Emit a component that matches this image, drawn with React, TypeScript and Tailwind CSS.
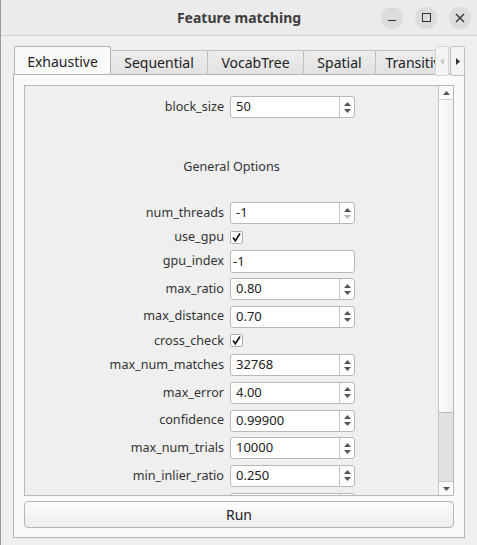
import React from "react";

const FONT = { fontFamily: '"Noto Sans", "DejaVu Sans", sans-serif' };

function SpinArrows({ downDisabled }: { downDisabled?: boolean }) {
  return (
    <div className="flex h-full w-[15px] flex-col items-center justify-center gap-[3px] border-l border-[#c4c4c4]">
      <svg width="7" height="4" viewBox="0 0 7 4">
        <path d="M3.5 0 L7 4 L0 4 Z" fill="#555" />
      </svg>
      <svg width="7" height="4" viewBox="0 0 7 4">
        <path d="M0 0 L7 0 L3.5 4 Z" fill={downDisabled ? "#b4b4b4" : "#555"} />
      </svg>
    </div>
  );
}

function Label({ text }: { text: string }) {
  return <div className="w-[199px] shrink-0 text-right text-[12.6px] leading-none text-[#333]">{text}</div>;
}

function SpinRow({ label, value, downDisabled }: { label: string; value: string; downDisabled?: boolean }) {
  return (
    <div className="flex h-[22px] shrink-0 items-center gap-[6px]">
      <Label text={label} />
      <div className="flex h-[22px] w-[125px] items-center rounded-[3px] border border-[#b8b8b8] bg-white">
        <div className="flex-1 pl-[5px] text-[13px] text-[#222]">{value}</div>
        <SpinArrows downDisabled={downDisabled} />
      </div>
    </div>
  );
}

function LineRow({ label, value }: { label: string; value: string }) {
  return (
    <div className="flex h-[22px] shrink-0 items-center gap-[6px]">
      <Label text={label} />
      <div className="flex h-[23px] w-[125px] items-center rounded-[3px] border border-[#b8b8b8] bg-white pl-[2px] text-[13px] text-[#222]">
        {value}
      </div>
    </div>
  );
}

function CheckRow({ label }: { label: string }) {
  return (
    <div className="flex h-[15px] shrink-0 items-center gap-[6px]">
      <Label text={label} />
      <div className="flex h-[13px] w-[13px] items-center justify-center rounded-[2px] border border-[#b0b0b0] bg-white">
        <svg width="11" height="11" viewBox="0 0 11 11">
          <path d="M2 5.5 L4.3 8.8 L9 1.5" fill="none" stroke="#111" strokeWidth="1.6" />
        </svg>
      </div>
    </div>
  );
}

function Tab({ text, w, active }: { text: string; w: string; active?: boolean }) {
  if (active) {
    return (
      <div className={`${w} relative z-10 -mb-px flex h-[29px] shrink-0 items-center justify-center rounded-t-[3px] border border-b-0 border-[#b4b4b4] bg-[#fafafa] text-[14px] text-[#222]`}>
        {text}
      </div>
    );
  }
  return (
    <div className={`${w} -ml-px flex h-[24px] shrink-0 items-center justify-center rounded-t-[2px] border border-b-0 border-[#c0c0c0] bg-gradient-to-b from-[#ececec] to-[#e2e2e2] text-[14px] text-[#222]`}>
      {text}
    </div>
  );
}

export default function App() {
  return (
    <div style={FONT} className="flex h-[545px] w-[477px] flex-col overflow-hidden border-l border-[#9a9a9a] bg-[#efefef]">
      {/* title bar */}
      <div className="grid h-[36px] shrink-0 grid-cols-[1fr_auto_1fr] items-center border-b border-[#d2d2d2] bg-[#ebebeb]">
        <div />
        <div className="text-[14px] font-bold text-[#3d3d3d]">Feature matching</div>
        <div className="flex justify-end gap-[12px] pr-[6px]">
          <div className="flex h-[22px] w-[22px] items-center justify-center rounded-full bg-[#dcdcdc]">
            <div className="mt-[6px] h-[1.5px] w-[8px] bg-[#333]" />
          </div>
          <div className="flex h-[22px] w-[22px] items-center justify-center rounded-full bg-[#dcdcdc]">
            <div className="h-[9px] w-[9px] border-[1.5px] border-[#333]" />
          </div>
          <div className="flex h-[22px] w-[22px] items-center justify-center rounded-full bg-[#dcdcdc]">
            <svg width="10" height="10" viewBox="0 0 10 10">
              <path d="M1 1 L9 9 M9 1 L1 9" stroke="#333" strokeWidth="1.4" />
            </svg>
          </div>
        </div>
      </div>

      <div className="flex flex-1 flex-col px-[12px] pt-[10px]">
        {/* tab bar */}
        <div className="relative z-10 flex h-[28px] items-end">
          <div className="flex flex-1 items-end overflow-hidden pl-px">
            <Tab text="Exhaustive" w="w-[97px]" active />
            <Tab text="Sequential" w="w-[98px]" />
            <Tab text="VocabTree" w="w-[97px]" />
            <Tab text="Spatial" w="w-[73px]" />
            <Tab text="Transitive" w="w-[84px]" />
          </div>
          <div className="-mb-[2px] flex h-[30px] shrink-0 gap-px self-start">
            <div className="flex w-[14px] items-center justify-center rounded-[2px] border border-[#d4d4d4] bg-[#f4f4f4]">
              <svg width="4" height="7" viewBox="0 0 4 7"><path d="M4 0 L0 3.5 L4 7 Z" fill="#c8c8c8" /></svg>
            </div>
            <div className="flex w-[15px] items-center justify-center rounded-[2px] border border-[#c0c0c0] bg-[#f4f4f4]">
              <svg width="4" height="7" viewBox="0 0 4 7"><path d="M0 0 L4 3.5 L0 7 Z" fill="#333" /></svg>
            </div>
          </div>
        </div>

        {/* tab panel */}
        <div className="flex h-[464px] flex-col border border-[#b4b4b4] bg-[#fafafa] px-[10px] pt-[10px]">
          <div className="flex h-[411px] border border-[#b8b8b8] bg-[#efefef]">
            <div className="flex flex-1 flex-col overflow-hidden pt-[10px]">
              <SpinRow label="block_size" value="50" />
              <div className="mt-[40px] h-[18px] shrink-0 text-center text-[12.6px] leading-[18px] text-[#333]">General Options</div>
              <div className="mt-[26px] flex flex-col gap-[5.7px]">
                <SpinRow label="num_threads" value="-1" downDisabled />
                <CheckRow label="use_gpu" />
                <LineRow label="gpu_index" value="-1" />
                <SpinRow label="max_ratio" value="0.80" />
                <SpinRow label="max_distance" value="0.70" />
                <CheckRow label="cross_check" />
                <SpinRow label="max_num_matches" value="32768" />
                <SpinRow label="max_error" value="4.00" />
                <SpinRow label="confidence" value="0.99900" />
                <SpinRow label="max_num_trials" value="10000" />
                <SpinRow label="min_inlier_ratio" value="0.250" />
                <SpinRow label="min_num_inliers" value="" />
              </div>
            </div>
            {/* scrollbar */}
            <div className="flex w-[15px] shrink-0 flex-col border-l border-[#c4c4c4] bg-[#fafafa]">
              <div className="flex h-[14px] items-center justify-center border-b border-[#d0d0d0]">
                <svg width="7" height="4" viewBox="0 0 7 4"><path d="M3.5 0 L7 4 L0 4 Z" fill="#555" /></svg>
              </div>
              <div className="h-[313px] border-b border-[#b8b8b8] bg-gradient-to-r from-[#fdfdfd] to-[#f0f0f0]" />
              <div className="flex-1 bg-[#e1e1e1]" />
              <div className="flex h-[14px] items-center justify-center border-t border-[#c8c8c8] bg-[#fafafa]">
                <svg width="7" height="4" viewBox="0 0 7 4"><path d="M0 0 L7 0 L3.5 4 Z" fill="#555" /></svg>
              </div>
            </div>
          </div>
          <button className="mt-[5px] flex h-[27px] items-center justify-center rounded-[4px] border border-[#b4b4b4] bg-gradient-to-b from-[#fbfbfb] to-[#ededed] text-[14px] text-[#222]">
            Run
          </button>
        </div>
      </div>
    </div>
  );
}
